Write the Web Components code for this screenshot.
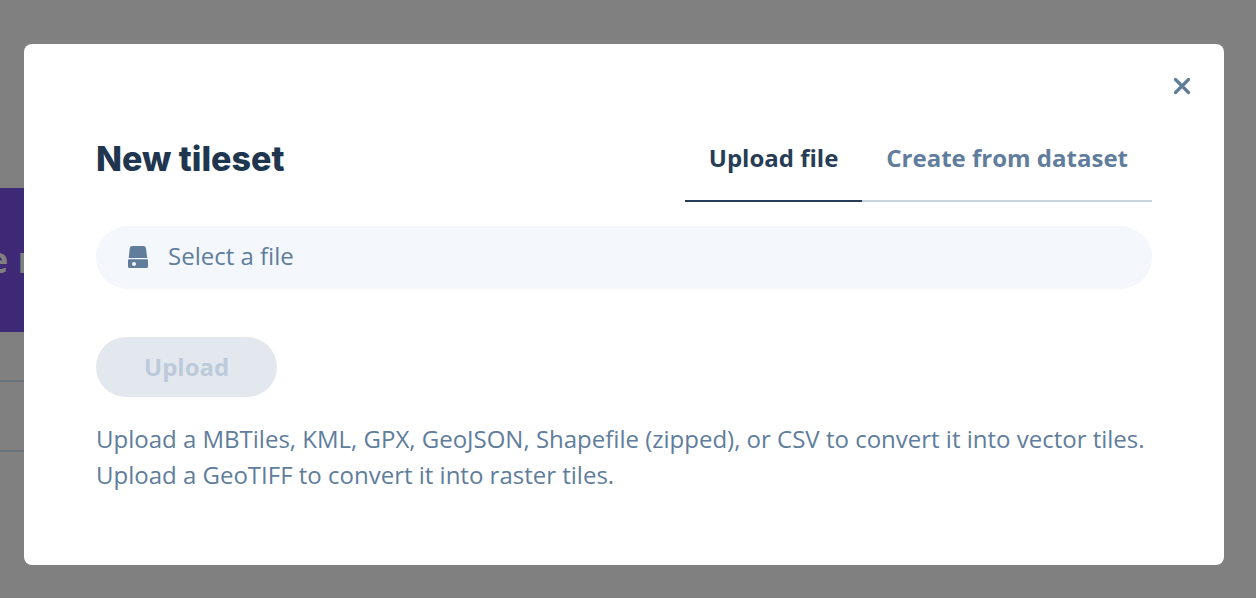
<!DOCTYPE html>
<html lang="en">
<head>
<meta charset="utf-8">
<title>New tileset</title>
<style>
  :root {
    --ink: #273d56;
    --slate: #607d9c;
    --rule: #c6d2de;
    --field: #f4f7fc;
    --disabled: #e3e8ef;
    --disabled-ink: #bdcad9;
  }
  body {
    margin: 0;
    font: 24px/36px "Open Sans", "Noto Sans", sans-serif;
    color: var(--slate);
  }
</style>
</head>
<body>
<tileset-app></tileset-app>
<script>
const define = (name, markup, setup) => {
  const template = document.createElement('template');
  template.innerHTML = markup;
  customElements.define(name, class extends HTMLElement {
    constructor() {
      super();
      this.attachShadow({ mode: 'open' }).append(template.content.cloneNode(true));
    }
    connectedCallback() { if (setup) setup(this, this.shadowRoot); }
  });
};

define('page-backdrop', `
  <style>
    :host { display: block; min-height: 100vh; box-sizing: border-box; padding: 188px 32px 0 0; background: #808080; overflow: hidden; }
    .banner { display: flex; align-items: center; height: 144px; background: #3d2975; color: #808080; font-size: 36px; font-weight: 700; white-space: pre; }
    .banner span { margin-left: -13px; }
    .row { height: 48px; border-bottom: 2px solid #67707b; }
    .row + .row { height: 68px; }
  </style>
  <div class="banner"><span>e n</span></div>
  <div class="row"></div>
  <div class="row"></div>`);

define('close-button', `
  <style>
    :host { display: block; }
    button { display: grid; place-items: center; width: 36px; height: 36px; padding: 0; border: 0; background: none; color: var(--slate); cursor: pointer; }
  </style>
  <button type="button" aria-label="Close">
    <svg width="18" height="18" viewBox="0 0 18 18" fill="none" stroke="currentColor" stroke-width="3.2" stroke-linecap="round"><path d="M2.500 2.500 15.500 15.500M15.500 2.500 2.500 15.500"/></svg>
  </button>`);

define('modal-card', `
  <style>
    :host { display: block; position: relative; box-sizing: border-box; max-width: 1200px; padding: 72px; border-radius: 8px; background: #fff; }
    close-button { position: absolute; top: 24px; right: 24px; }
  </style>
  <close-button></close-button>
  <slot></slot>`);

define('modal-header', `
  <style>
    :host { display: flex; flex-wrap: wrap; justify-content: space-between; align-items: center; }
    h1 { margin: 0; font: 800 34px/48px Inter, sans-serif; color: #20364f; }
  </style>
  <h1><slot></slot></h1>
  <slot name="tabs"></slot>`);

define('tab-list', `
  <style>:host { display: flex; }</style>
  <slot></slot>`);

define('tab-item', `
  <style>
    :host { display: block; }
    button { display: block; padding: 24px; border: 0; border-bottom: 2px solid var(--rule); background: none; font: inherit; font-weight: 700; color: var(--slate); cursor: pointer; }
    :host([selected]) button { border-color: var(--ink); color: var(--ink); }
  </style>
  <button type="button" role="tab"><slot></slot></button>`,
  (host, root) => root.querySelector('button').setAttribute('aria-selected', host.hasAttribute('selected')));

define('file-field', `
  <style>
    :host { display: block; margin-top: 24px; }
    label { position: relative; display: flex; align-items: center; gap: 18px; padding: 12px 32px 15px; border-radius: 32px; background: var(--field); cursor: pointer; }
    input { position: absolute; inset: 0; width: 100%; height: 100%; opacity: 0; cursor: pointer; }
    svg { display: block; flex: none; }
  </style>
  <label for="file">
    <svg width="22" height="24" viewBox="0 0 22 24" fill="var(--slate)" aria-hidden="true">
      <path d="M4.200 2h11.200q2.100 0 2.500 2L19.300 14H.7L1.800 4Q2.100 2 4.200 2Z"/>
      <path fill-rule="evenodd" d="M1 15.300h18q1 0 1 1v6q0 2-2 2H2q-2 0-2-2V16.300q0-1 1-1ZM6 18a2 2 0 1 0 0 4 2 2 0 1 0 0-4Z"/>
    </svg>
    <slot></slot>
    <input id="file" type="file">
  </label>`);

define('pill-button', `
  <style>
    :host { display: block; margin: 48px 0 24px; }
    button { display: block; padding: 12px 48px; border: 0; border-radius: 30px; background: var(--disabled); color: var(--disabled-ink); font: inherit; font-weight: 700; }
  </style>
  <button type="button" disabled><slot></slot></button>`);

define('help-text', `
  <style>:host { display: block; } p { margin: 0; }</style>
  <p><slot></slot></p>`);

define('tileset-app', `
  <style>
    :host { display: block; }
    .overlay { position: absolute; inset: 0; padding: 44px 32px 32px 24px; }
  </style>
  <page-backdrop aria-hidden="true"></page-backdrop>
  <div class="overlay">
    <modal-card role="dialog" aria-label="New tileset">
      <modal-header>New tileset
        <tab-list slot="tabs" role="tablist">
          <tab-item selected>Upload file</tab-item>
          <tab-item>Create from dataset</tab-item>
        </tab-list>
      </modal-header>
      <file-field>Select a file</file-field>
      <pill-button>Upload</pill-button>
      <help-text>Upload a MBTiles, KML, GPX, GeoJSON, Shapefile (zipped), or CSV to convert it into vector tiles. Upload a GeoTIFF to convert it into raster tiles.</help-text>
    </modal-card>
  </div>`);
</script>
</body>
</html>
